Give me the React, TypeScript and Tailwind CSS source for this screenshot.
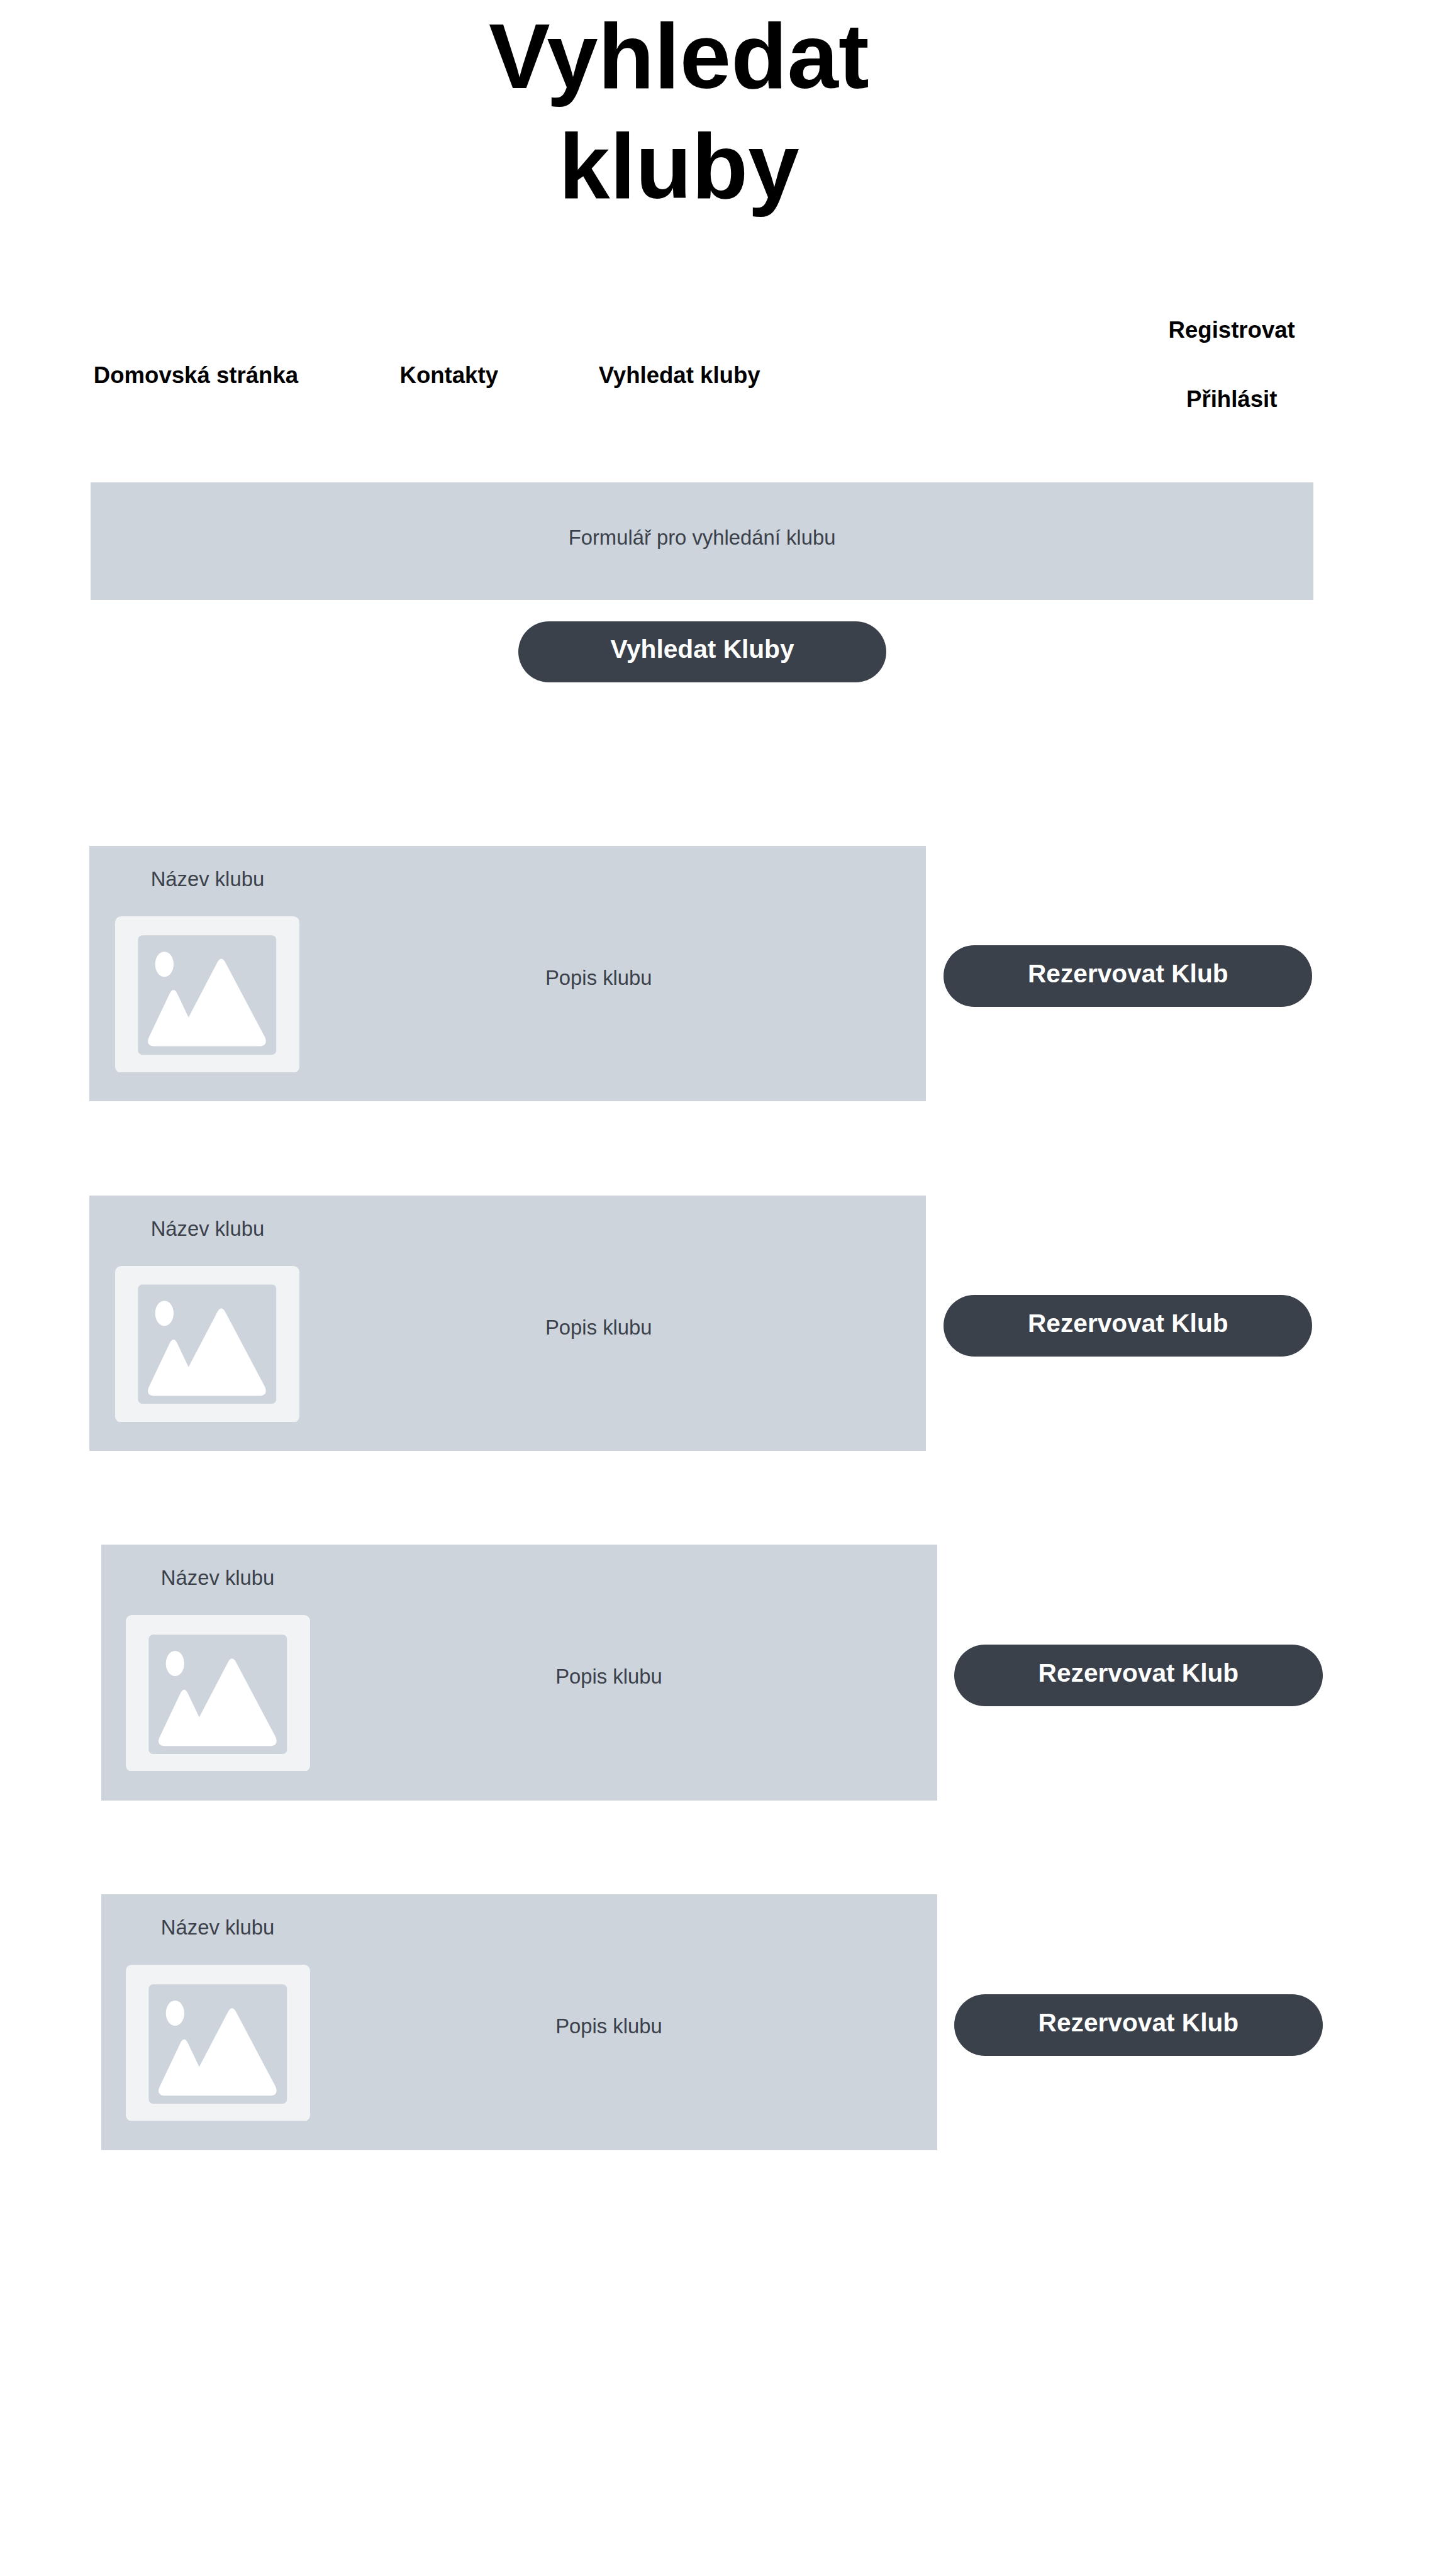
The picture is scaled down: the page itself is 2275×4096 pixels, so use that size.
type Club = {
  row: string;
  card: string;
  column: string;
  button: string;
  windowShift: number;
  peakShift: number;
};

const clubs: Club[] = [
  { row: "ml-[142.4px]", card: "h-[406px]", column: "ml-[41px]", button: "ml-[28.8px] mt-[158.5px]", windowShift: 0, peakShift: 0 },
  { row: "ml-[142.4px] mt-[150px]", card: "h-[406px]", column: "ml-[41px]", button: "ml-[28.8px] mt-[158.2px]", windowShift: -1, peakShift: 0 },
  { row: "ml-[161px] mt-[149px]", card: "h-[407px]", column: "ml-[38.6px]", button: "ml-[26.8px] mt-[159.2px]", windowShift: 0.9, peakShift: 1.8 },
  { row: "ml-[161px] mt-[149px]", card: "h-[407px]", column: "ml-[38.6px]", button: "ml-[26.8px] mt-[159.2px]", windowShift: 0.9, peakShift: 1.8 },
];

function Picture({ windowShift, peakShift }: { windowShift: number; peakShift: number }) {
  return (
    <svg viewBox="0 0 300 255" className="mt-[40px] block h-[248.9px] w-[293px]" preserveAspectRatio="none">
      <rect width="300" height="255" rx="10" fill="#f1f3f5" />
      <g transform={`translate(0 ${windowShift})`}>
        <rect x="37.3" y="31.1" width="225" height="194.3" rx="7" fill="#cdd4dc" />
        <ellipse cx="80.2" cy="78.1" rx="15" ry="20.5" fill="#fff" />
      </g>
      <path
        transform={`translate(0 ${peakShift})`}
        fill="#fff"
        d="M54.6 198 L89.6 124.3 Q95 115.6 100.3 124.3 L119.5 164.6 L166.8 74.2 Q172.9 64 179 74.2 L243.9 197 Q249 209.5 237.2 211.6 L62.2 211.6 Q50 210.5 54.6 198 Z"
      />
    </svg>
  );
}

function Pill({ label, className }: { label: string; className: string }) {
  return (
    <button
      className={`block h-[97.6px] w-[585.6px] shrink-0 rounded-full bg-[#3b414b] pb-[30.2px] pt-[21.4px] text-center text-[40.67px] font-bold leading-[46px] text-white ${className}`}
    >
      {label}
    </button>
  );
}

function ClubRow({ club }: { club: Club }) {
  return (
    <article className={`flex items-start ${club.row}`}>
      <div className={`flex w-[1329.3px] shrink-0 items-start bg-[#cdd4dc] text-[32.8px] leading-[38px] text-[#3b414b] ${club.card}`}>
        <div className={`flex w-[293px] shrink-0 flex-col items-center pt-[33.6px] ${club.column}`}>
          <h2>Název klubu</h2>
          <Picture windowShift={club.windowShift} peakShift={club.peakShift} />
        </div>
        <p className="ml-[390.6px] mt-[190.6px]">Popis klubu</p>
      </div>
      <Pill label="Rezervovat Klub" className={club.button} />
    </article>
  );
}

export default function App() {
  return (
    <div className="flex h-[4096px] w-[2275px] flex-col overflow-hidden bg-white font-['Liberation_Sans',Arial,sans-serif] text-black">
      <header className="h-[503px] shrink-0 pt-[1.8px]">
        <h1 className="ml-[679.4px] w-[800px] text-center text-[146.4px] font-bold leading-[175.68px]">
          Vyhledat
          <br />
          kluby
        </h1>
      </header>
      <nav className="flex h-[264px] shrink-0 items-start pl-[148.8px] text-[36.6px] font-bold leading-[44px]">
        <a className="mt-[71.8px] w-[486.7px]">Domovská stránka</a>
        <a className="mt-[71.8px] w-[316.3px]">Kontakty</a>
        <a className="mt-[71.8px] w-[806.4px]">Vyhledat kluby</a>
        <div className="flex w-[400px] flex-col items-center gap-[65.6px]">
          <a>Registrovat</a>
          <a>Přihlásit</a>
        </div>
      </nav>
      <form className="ml-[144px] h-[187px] w-[1944px] shrink-0 bg-[#cdd4dc] pt-[69px] text-center text-[32.8px] leading-[38px] text-[#3b414b]">
        Formulář pro vyhledání klubu
      </form>
      <Pill label="Vyhledat Kluby" className="ml-[823.7px] mt-[33.8px]" />
      <main className="mt-[259.6px] flex flex-col">
        {clubs.map((club, i) => (
          <ClubRow key={i} club={club} />
        ))}
      </main>
    </div>
  );
}
